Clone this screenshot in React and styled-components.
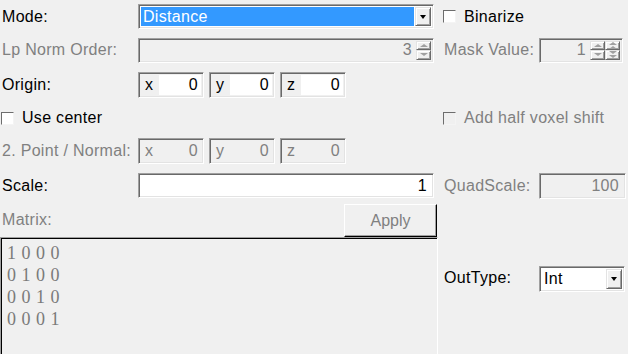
import styled, { createGlobalStyle, css } from "styled-components";

const GlobalStyle = createGlobalStyle`
  html, body {
    margin: 0;
    padding: 0;
    background: #f0f0f0;
    overflow: hidden;
  }
  body {
    font-family: "Liberation Sans", Arial, sans-serif;
    font-size: 16px;
    letter-spacing: 0.3px;
  }
  #root {
    width: 628px;
    height: 354px;
  }
`;

const sunken = css`
  box-sizing: border-box;
  border: 1px solid;
  border-color: #a0a0a0 #ffffff #ffffff #a0a0a0;
  box-shadow: inset 1px 1px 0 #696969, inset -1px -1px 0 #e3e3e3;
`;

const raised = css`
  box-sizing: border-box;
  border: 1px solid;
  border-color: #e3e3e3 #696969 #696969 #e3e3e3;
  box-shadow: inset 1px 1px 0 #ffffff, inset -1px -1px 0 #a0a0a0;
  background: #f0f0f0;
`;

const Panel = styled.div`
  display: grid;
  grid-template-columns: 138px 300px 101px 89px;
  grid-template-rows: 33px 34px 35px 32px 34px 35px 34px 117px;
  height: 354px;
  overflow: hidden;
`;

const Label = styled.span`
  align-self: ${(p) => (p.$top ? "start" : "center")};
  margin-top: ${(p) => (p.$top ? "32px" : "0")};
  padding-left: ${(p) => (p.$right ? "6px" : "2px")};
  color: ${(p) => (p.$off ? "#808080" : "#000")};
  white-space: nowrap;
`;

const Field = styled.div`
  ${sunken};
  align-self: center;
  display: flex;
  align-items: center;
  width: ${(p) => p.$w}px;
  height: ${(p) => p.$h || 25}px;
  padding: 2px;
  background: ${(p) => (p.$white ? "#fff" : "#f0f0f0")};
`;

const Value = styled.span`
  flex: 1;
  text-align: right;
  padding-right: 4px;
  color: ${(p) => (p.$off ? "#808080" : "#000")};
`;

const Selected = styled.span`
  flex: 1;
  align-self: stretch;
  display: flex;
  align-items: center;
  padding-left: 2px;
  background: ${(p) => (p.$hl ? "#3399ff" : "transparent")};
  color: ${(p) => (p.$hl ? "#fff" : "#000")};
`;

const DropButton = styled.span`
  ${raised};
  width: 16px;
  align-self: stretch;
  margin-left: 1px;
  display: flex;
  align-items: center;
  justify-content: center;
  &::after {
    content: "";
    border-left: 3.5px solid transparent;
    border-right: 3.5px solid transparent;
    border-top: 4px solid #000;
  }
`;

const SpinColumn = styled.span`
  display: flex;
  flex-direction: column;
  width: 15px;
  align-self: stretch;
`;

const SpinButton = styled.span`
  ${raised};
  flex: 1;
  display: flex;
  flex-direction: column;
  align-items: center;
  justify-content: center;
  gap: 1px;
`;

const Arrow = styled.span`
  width: 0;
  height: 0;
  border-left: 4px solid transparent;
  border-right: 4px solid transparent;
  ${(p) =>
    p.$up
      ? "border-bottom: 3px solid #a0a0a0;"
      : "border-top: 3px solid #a0a0a0;"}
`;

const Spin = ({ double }) => (
  <SpinColumn>
    <SpinButton>
      <Arrow $up />
      {double && <Arrow $up />}
    </SpinButton>
    <SpinButton>
      {double && <Arrow />}
      <Arrow />
    </SpinButton>
  </SpinColumn>
);

const Triple = styled.div`
  align-self: center;
  display: flex;
  gap: 5px;
`;

const Coord = styled.div`
  ${sunken};
  display: flex;
  align-items: stretch;
  width: 66px;
  height: 26px;
  padding: 2px;
  color: ${(p) => (p.$off ? "#808080" : "#000")};
`;

const Axis = styled.span`
  width: 14px;
  padding-left: 4px;
  display: flex;
  align-items: center;
`;

const CoordInput = styled.span`
  flex: 1;
  display: flex;
  align-items: center;
  justify-content: flex-end;
  padding-right: 3px;
  background: ${(p) => (p.$off ? "transparent" : "#fff")};
`;

const Check = styled.label`
  grid-column: ${(p) => p.$span || "auto"};
  align-self: center;
  display: flex;
  align-items: center;
  gap: 8px;
  padding-left: ${(p) => p.$pad || 0}px;
  color: ${(p) => (p.$off ? "#808080" : "#000")};
  white-space: nowrap;
`;

const Box = styled.span`
  width: 13px;
  height: 13px;
  box-sizing: border-box;
  border: 1px solid;
  border-color: #6d6d6d #f4f4f4 #f4f4f4 #6d6d6d;
  background: ${(p) => (p.$off ? "#f0f0f0" : "#fff")};
  margin-left: 1px;
`;

const ApplyButton = styled.button`
  ${raised};
  border-color: #ffffff #000 #000 #ffffff;
  box-shadow: inset -1px -1px 0 #a0a0a0;
  justify-self: end;
  align-self: end;
  width: 93px;
  height: 33px;
  margin-right: 1px;
  font: inherit;
  color: #808080;
  padding: 0;
`;

const Matrix = styled.div`
  grid-column: 1 / span 2;
  align-self: start;
  box-sizing: border-box;
  width: 438px;
  height: 140px;
  border: 1px solid;
  border-color: #a0a0a0 #ffffff #ffffff #a0a0a0;
  box-shadow: inset 1px 1px 0 #000;
  padding: 4px 6px;
  font-family: "Liberation Serif", "Times New Roman", serif;
  font-size: 18px;
  line-height: 22px;
  letter-spacing: 0;
  color: #7a7a7a;
  word-spacing: 1px;
`;

const Combo = styled(Field)`
  align-self: start;
  margin-top: 29px;
  height: 26px;
`;

const Spacer = styled.span``;

export default function App() {
  return (
    <>
      <GlobalStyle />
      <Panel>
        <Label>Mode:</Label>
        <Field $w={296} $white>
          <Selected $hl>Distance</Selected>
          <DropButton />
        </Field>
        <Check $span="3 / span 2" $pad={4}>
          <Box />
          Binarize
        </Check>

        <Label $off>Lp Norm Order:</Label>
        <Field $w={296}>
          <Value $off>3</Value>
          <Spin />
        </Field>
        <Label $off $right>
          Mask Value:
        </Label>
        <Field $w={84}>
          <Value $off>1</Value>
          <Spin />
          <Spin double />
        </Field>

        <Label>Origin:</Label>
        <Triple>
          {["x", "y", "z"].map((a) => (
            <Coord key={a}>
              <Axis>{a}</Axis>
              <CoordInput>0</CoordInput>
            </Coord>
          ))}
        </Triple>
        <Spacer />
        <Spacer />

        <Check $span="1 / span 2" $pad={0}>
          <Box />
          Use center
        </Check>
        <Check $span="3 / span 2" $pad={4} $off>
          <Box $off />
          Add half voxel shift
        </Check>

        <Label $off>2. Point / Normal:</Label>
        <Triple>
          {["x", "y", "z"].map((a) => (
            <Coord key={a} $off>
              <Axis>{a}</Axis>
              <CoordInput $off>0</CoordInput>
            </Coord>
          ))}
        </Triple>
        <Spacer />
        <Spacer />

        <Label>Scale:</Label>
        <Field $w={296} $white>
          <Value>1</Value>
        </Field>
        <Label $off $right>
          QuadScale:
        </Label>
        <Field $w={87} $h={26}>
          <Value $off>100</Value>
        </Field>

        <Label $off>Matrix:</Label>
        <ApplyButton>Apply</ApplyButton>
        <Spacer />
        <Spacer />

        <Matrix>
          <div>1 0 0 0</div>
          <div>0 1 0 0</div>
          <div>0 0 1 0</div>
          <div>0 0 0 1</div>
        </Matrix>
        <Label $right $top>
          OutType:
        </Label>
        <Combo $w={86} $white>
          <Selected>Int</Selected>
          <DropButton />
        </Combo>
      </Panel>
    </>
  );
}
